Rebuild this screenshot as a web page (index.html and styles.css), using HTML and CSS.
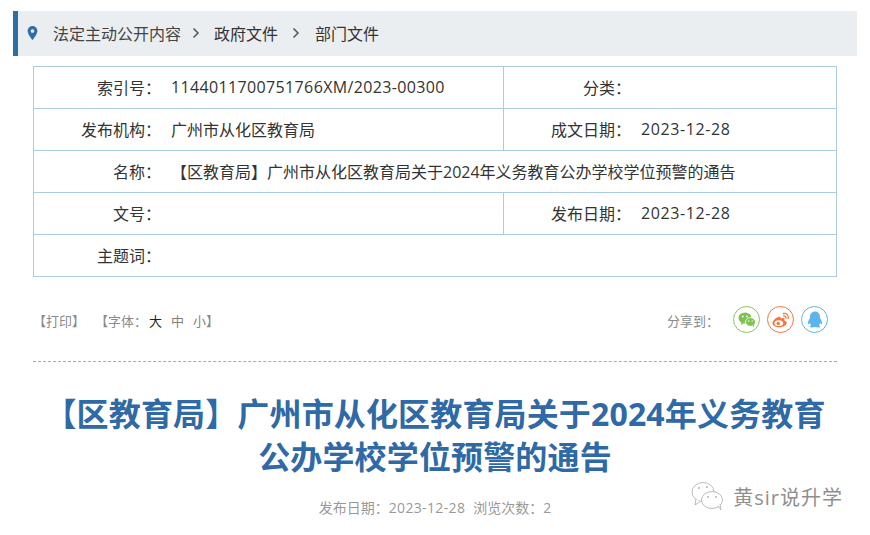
FILE: index.html
```html
<!DOCTYPE html>
<html lang="zh-CN">
<head>
<meta charset="utf-8">
<title>关于2024年义务教育公办学校学位预警的通告</title>
<link rel="stylesheet" href="styles.css">
</head>
<body>
<nav class="crumb">
  <svg class="pin" viewBox="0 0 12 16" width="11" height="14"><path fill="#2f6ea5" fill-rule="evenodd" d="M6 0a5.600 5.600 0 0 0-5.600 5.600C.4 9.500 6 16 6 16s5.600-6.500 5.600-10.400A5.600 5.600 0 0 0 6 0zm0 3.600a2.100 2.100 0 1 1 0 4.200 2.100 2.100 0 0 1 0-4.200z"/></svg>
  <a class="c1">法定主动公开内容</a>
  <svg class="chev" viewBox="0 0 8 12" width="8" height="12"><path d="M1.500 1.500 6 6l-4.500 4.500" fill="none" stroke="#555" stroke-width="1.500"/></svg>
  <a class="c2">政府文件</a>
  <svg class="chev chev2" viewBox="0 0 8 12" width="8" height="12"><path d="M1.500 1.500 6 6l-4.500 4.500" fill="none" stroke="#555" stroke-width="1.500"/></svg>
  <a class="c2">部门文件</a>
</nav>

<div class="meta">
  <div class="row">
    <div class="cell left"><span class="k">索引号：</span><span class="v num">1144011700751766XM/2023-00300</span></div>
    <div class="cell"><span class="k">分类：</span><span class="v"></span></div>
  </div>
  <div class="row">
    <div class="cell left"><span class="k">发布机构：</span><span class="v">广州市从化区教育局</span></div>
    <div class="cell"><span class="k">成文日期：</span><span class="v date">2023-12-28</span></div>
  </div>
  <div class="row">
    <div class="cell"><span class="k">名称：</span><span class="v">【区教育局】广州市从化区教育局关于2024年义务教育公办学校学位预警的通告</span></div>
  </div>
  <div class="row">
    <div class="cell left"><span class="k">文号：</span><span class="v"></span></div>
    <div class="cell"><span class="k">发布日期：</span><span class="v date">2023-12-28</span></div>
  </div>
  <div class="row">
    <div class="cell"><span class="k">主题词：</span><span class="v"></span></div>
  </div>
</div>

<div class="tools">
  <div class="opts">
    <span>【打印】</span>
    <span class="font-opts">【字体：<b class="on">大</b><b>中</b><b>小</b>】</span>
  </div>
  <div class="share">
    <span class="share-label">分享到：</span>
    <span class="ico wx">
      <svg viewBox="0 0 20 20" width="20" height="20"><ellipse cx="8" cy="8" rx="6.500" ry="5.500" fill="#7fc34e"/><path d="M4.500 12l-.5 3 3-2z" fill="#7fc34e"/><ellipse cx="13.500" cy="12" rx="5" ry="4.300" fill="#7fc34e" stroke="#fff" stroke-width=".8"/><path d="M15.500 15.500l1.500 2-.3-3z" fill="#7fc34e"/><circle cx="5.800" cy="6.500" r=".9" fill="#fff"/><circle cx="10" cy="6.500" r=".9" fill="#fff"/><circle cx="11.800" cy="11" r=".7" fill="#fff"/><circle cx="15.200" cy="11" r=".7" fill="#fff"/></svg>
    </span>
    <span class="ico wb">
      <svg viewBox="0 0 20 20" width="20" height="20"><path d="M8.500 6.500C5 7.500 1.500 10.500 1.500 13.300c0 2.300 3 4 6.700 4 4.300 0 7.500-2.300 7.500-4.500 0-1.500-1.500-2-2.500-2.300.5-1.300.3-2.300-1-2.500-1 0-2.500.6-2.500.6s.5-2-1.200-1.600z" fill="#f9743b"/><ellipse cx="7.800" cy="13.200" rx="4.300" ry="2.900" fill="#fff"/><circle cx="7.300" cy="13.400" r="1.700" fill="#f9743b"/><path d="M12.500 3.500c3-.6 5.500 2 4.700 5M12.800 6c1.500-.3 2.500 1 2.200 2.400" fill="none" stroke="#f9743b" stroke-width="1.300" stroke-linecap="round"/></svg>
    </span>
    <span class="ico qq">
      <svg viewBox="0 0 20 20" width="20" height="20"><path d="M10 1.500c-3.300 0-5 2.500-5 5.500 0 1-.2 1.500-.8 2.500-1 1.700-1.700 3.500-1.200 4.500.4.600 1.300-.5 1.800-1.200.2 1.200.8 2 1.500 2.700-1 .4-1.800.9-1.500 1.500.5.700 3.500.6 5.200 0 1.700.6 4.700.7 5.200 0 .3-.6-.5-1.100-1.500-1.500.7-.7 1.300-1.500 1.500-2.700.5.700 1.400 1.800 1.800 1.200.5-1-.2-2.800-1.200-4.500-.6-1-.8-1.500-.8-2.500 0-3-1.700-5.500-5-5.500z" fill="#5bb5ec"/></svg>
    </span>
  </div>
</div>

<header class="title-block">
  <h1>【区教育局】广州市从化区教育局关于2024年义务教育公办学校学位预警的通告</h1>
  <p class="sub"><span>发布日期：<span class="num">2023-12-28</span></span><span>浏览次数：2</span></p>
</header>

<div class="mark">
  <svg viewBox="0 0 34 30" width="34" height="30"><g fill="#fff" stroke="#b4b4b4" stroke-width=".9"><ellipse cx="12" cy="11" rx="11" ry="9.500"/><path d="M5 18l-1 6 5-3.500"/><ellipse cx="21" cy="19" rx="10.500" ry="8.500"/><path d="M27 25l3 4-1-5.500"/></g><g fill="#b4b4b4"><circle cx="8" cy="7" r="1"/><circle cx="16" cy="6" r="1"/><circle cx="17" cy="16" r="1"/><circle cx="25" cy="16" r="1"/></g></svg>
  <span>黄sir说升学</span>
</div>
</body>
</html>
```
FILE: styles.css
```css
* { box-sizing: border-box; }
html, body { margin: 0; padding: 0; }
body {
  width: 870px;
  height: 535px;
  overflow: hidden;
  background: #fff;
  position: relative;
  padding: 11px 13px 0;
  font-family: "Open Sans", "Noto Sans CJK SC", sans-serif;
  color: #333;
}
.crumb {
  display: flex;
  align-items: center;
  height: 45px;
  padding-bottom: 1px;
  background: #ebeef1;
  border-left: 5px solid #2f6ea5;
  font-size: 16px;
  color: #333;
}
.pin { margin-left: 8.500px; margin-right: 15.500px; margin-top: -1px; }
.chev { margin: 0 14.500px 0 10.500px; }
.chev2 { margin: 0 15px 0 14px; }
.c1 { color: #444; }
.meta {
  margin: 10px 20px 0;
  border: 1px solid #abcbe3;
  border-bottom: 0;
  font-size: 16px;
}
.row {
  display: flex;
  height: 42px;
  border-bottom: 1px solid #abcbe3;
}
.cell { display: flex; align-items: center; flex: 1; padding-bottom: 1px; }
.cell.left { flex: 0 0 470px; border-right: 1px solid #abcbe3; }
.k { flex: 0 0 127px; margin-right: 10px; text-align: right; white-space: nowrap; }
.v { white-space: nowrap; }
.num { letter-spacing: .36px; }
.date { letter-spacing: .6px; }
.tools {
  display: flex;
  justify-content: space-between;
  align-items: center;
  margin: 0 20px;
  height: 85px;
  padding-top: 1px;
  border-bottom: 1px dashed #aaa;
  font-size: 13px;
  color: #8a8a8a;
}
.opts { display: flex; gap: 10px; padding-top: 1px; }
.font-opts b { font-weight: 400; margin-right: 9px; color: #8a7f78; }
.font-opts b:last-child { margin-right: 0; }
.font-opts b.on { color: #222; margin-left: 2px; }
.share { display: flex; align-items: center; margin-right: 9px; }
.share-label { margin-right: 14px; padding-top: 1px; }
.ico {
  width: 27px;
  height: 27px;
  border-radius: 50%;
  border: 1px solid;
  display: flex;
  align-items: center;
  justify-content: center;
  margin-left: 7px;
}
.share-label + .ico { margin-left: 0; }
.wx { border-color: #86c75a; }
.wb { border-color: #f9743b; }
.qq { border-color: #5bb5ec; }
.title-block { text-align: center; padding: 0 20px; }
h1 {
  margin: 30px 0 0;
  font-size: 32px;
  line-height: 43px;
  font-weight: 700;
  letter-spacing: .15px;
  color: #2f69a6;
}
.sub {
  margin: 19px 0 0;
  font-size: 14px;
  color: #999;
  display: flex;
  justify-content: center;
  gap: 8px;
}
.mark {
  position: absolute;
  right: 27px;
  top: 481px;
  display: flex;
  align-items: center;
  gap: 8px;
  font-size: 20px;
  letter-spacing: 1px;
  color: #8f8f8f;
}
```
